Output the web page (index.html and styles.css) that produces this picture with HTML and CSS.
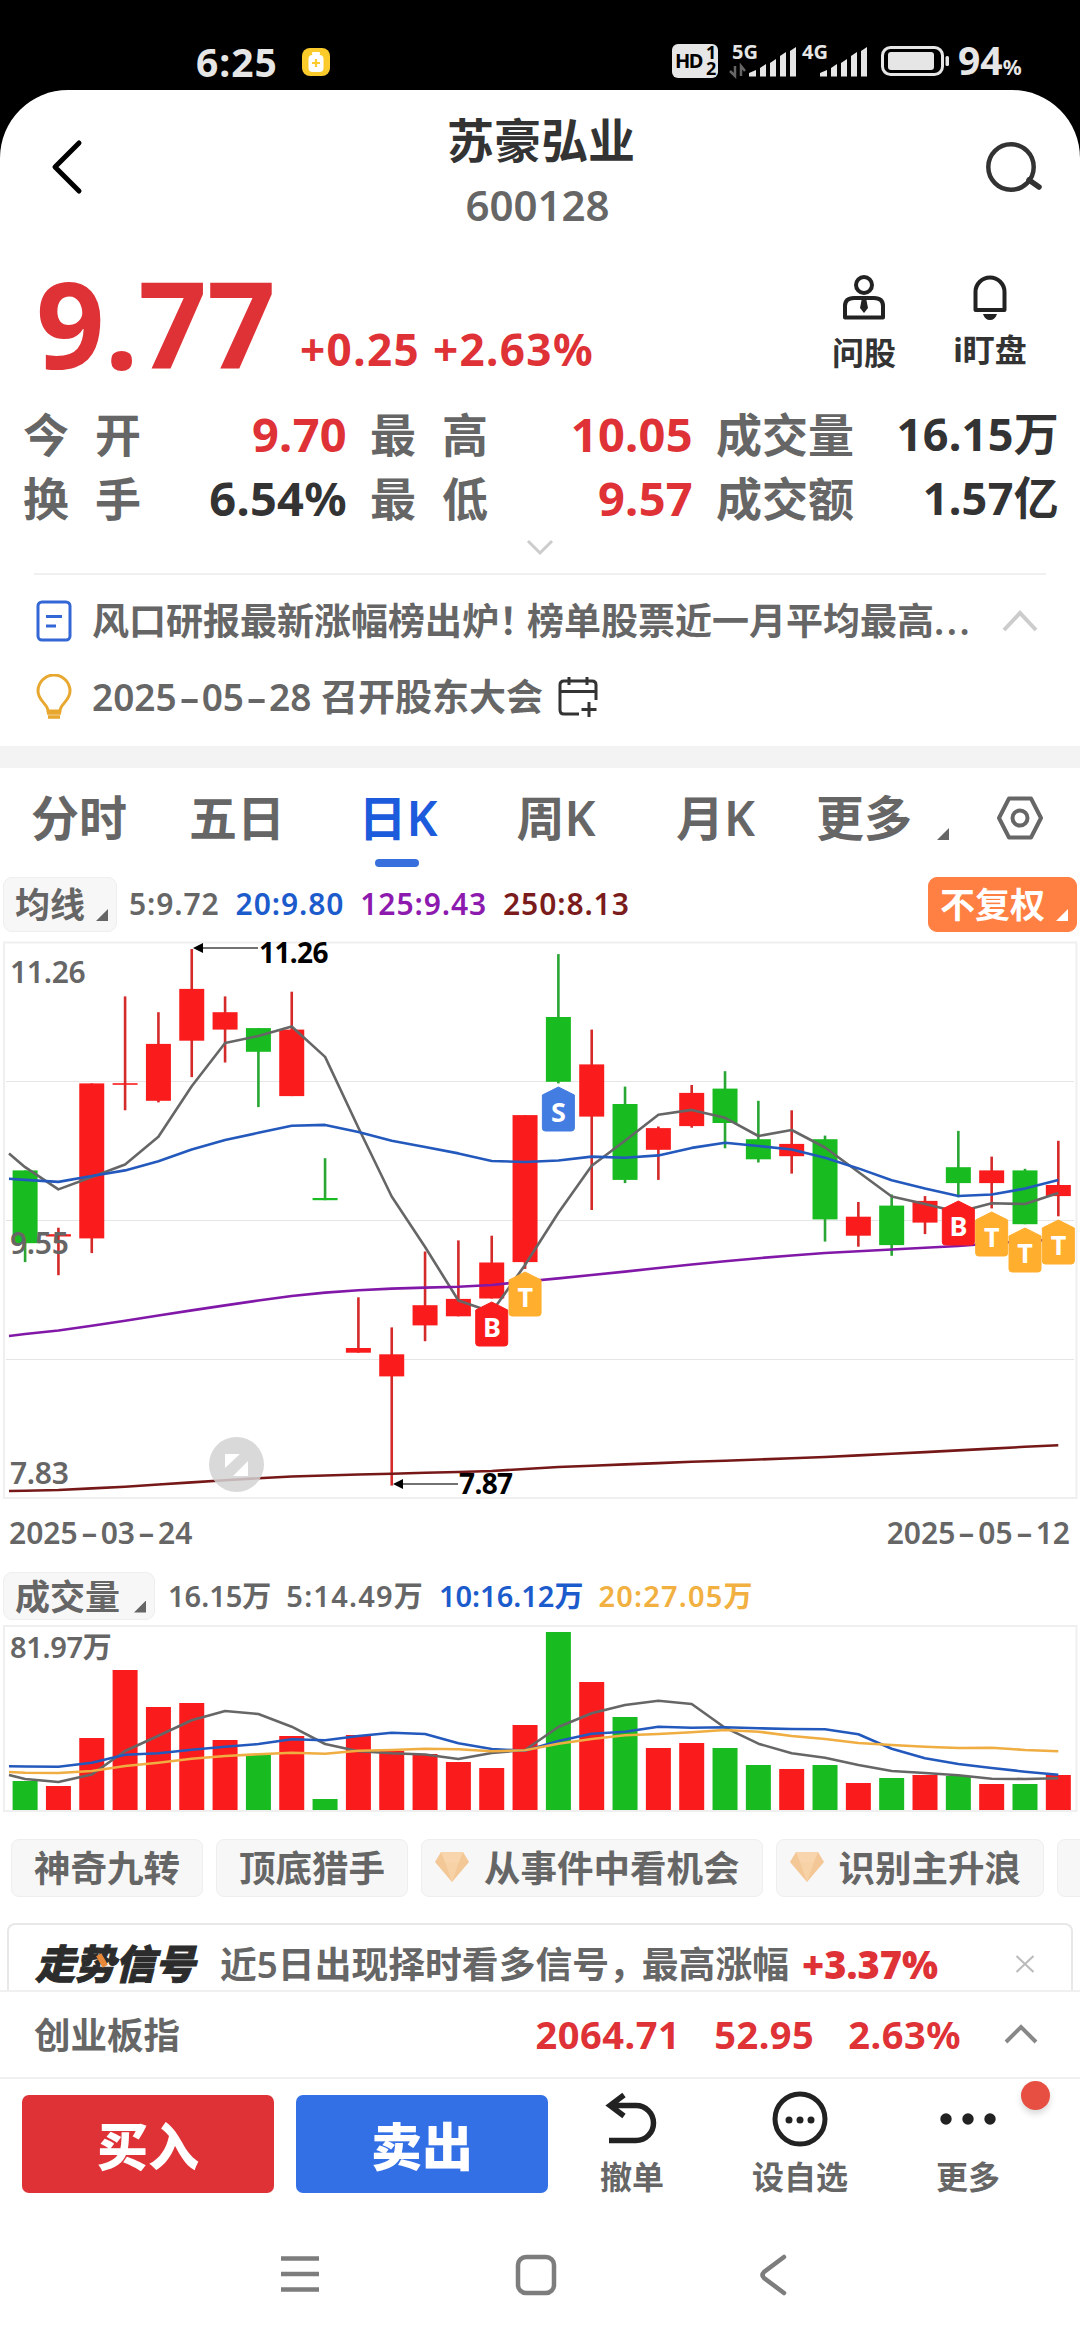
FILE: index.html
```
<!DOCTYPE html>
<html lang="zh-CN">
<head>
    <meta charset="UTF-8">
    <meta name="viewport" content="width=device-width, initial-scale=1.0">
    <title>苏豪弘业 600128</title>
    <link rel="stylesheet" href="styles.css">
</head>
<body>

<div class="status-bar">
    <span class="clock">6:25</span>
    <svg class="battery-tip" width="28" height="28" viewBox="0 0 28 28">
        <rect width="28" height="28" rx="8" fill="#fbcb2b"/>
        <rect x="6.500" y="7" width="15" height="17" rx="4" fill="#fff"/>
        <rect x="10" y="4" width="8" height="3" rx="1" fill="#fff"/>
        <path d="M14 11v8M10 15h8" stroke="#fbcb2b" stroke-width="2.200"/>
    </svg>
    <svg class="signals" width="280" height="40" viewBox="0 0 280 40">
        <rect x="1" y="2" width="46" height="34" rx="6" fill="#e6e6e6"/>
        <text class="hd" x="4" y="26">HD</text>
        <text class="hd-num" x="35" y="17">1</text>
        <text class="hd-num" x="35" y="33">2</text>
        <text class="net" x="61" y="17">5G</text>
        <path d="M64 24v10l-5-5M70 34V24l4 5" stroke="#666" stroke-width="2.500" fill="none"/>
        <path d="M78 31l7-3v6.500h-7zM89 26l6-4v12.500h-6zM99 21l6-4v17.500h-6zM109 14l6-4v24.500h-6zM119 9l6-4v29.500h-6z" fill="#e6e6e6"/>
        <text class="net" x="131" y="17">4G</text>
        <path d="M149 31l7-3v6.500h-7zM160 26l6-4v12.500h-6zM170 21l6-4v17.500h-6zM180 14l6-4v24.500h-6zM190 9l6-4v29.500h-6z" fill="#e6e6e6"/>
        <rect x="211.500" y="5.500" width="60" height="27" rx="8" fill="none" stroke="#e6e6e6" stroke-width="3"/>
        <rect x="217" y="10" width="46" height="18" rx="3" fill="#e6e6e6"/>
        <rect x="274.500" y="14" width="3.500" height="10" rx="1.500" fill="#e6e6e6"/>
    </svg>
    <span class="charge">94<small>%</small></span>
</div>

<div class="page">
    <header class="top-bar">
        <svg class="back" width="34" height="56" viewBox="0 0 34 56">
            <path d="M29 4L5 28l24 24" fill="none" stroke="#000" stroke-width="5" stroke-linecap="round" stroke-linejoin="round"/>
        </svg>
        <div class="stock">
            <h1>苏豪弘业</h1>
            <p>600128</p>
        </div>
        <svg class="search" width="60" height="54" viewBox="0 0 60 54">
            <circle cx="27" cy="27" r="22.700" fill="none" stroke="#333" stroke-width="4.500"/>
            <path d="M45 40l10 7" stroke="#333" stroke-width="5.500" stroke-linecap="round"/>
        </svg>
    </header>

    <section class="price-row">
        <span class="price">9.77</span>
        <span class="change">+0.25 +2.63%</span>
        <div class="tool ask">
            <svg width="44" height="46" viewBox="0 0 44 46">
                <g fill="none" stroke="#222" stroke-width="4">
                    <circle cx="22" cy="10" r="8"/>
                    <path d="M3 42.500V31q0-8 9-8h20q9 0 9 8v11.500z" stroke-linejoin="round"/>
                </g>
                <path d="M20 23h4l2 10-4 5-4-5z" fill="#222"/>
            </svg>
            <span>问股</span>
        </div>
        <div class="tool watch">
            <svg width="36" height="46" viewBox="0 0 36 46">
                <path d="M3.500 35V17a14.500 14.500 0 0 1 29 0v18z" fill="none" stroke="#222" stroke-width="4" stroke-linejoin="round"/>
                <path d="M11 39h14q-2 6-7 6t-7-6z" fill="#222"/>
            </svg>
            <span>i盯盘</span>
        </div>
    </section>

    <section class="stats">
        <div class="stat"><span class="label">今<i></i>开</span><b class="up">9.70</b></div>
        <div class="stat"><span class="label">最<i></i>高</span><b class="up">10.05</b></div>
        <div class="stat"><span class="label">成交量</span><b>16.15万</b></div>
        <div class="stat"><span class="label">换<i></i>手</span><b>6.54%</b></div>
        <div class="stat"><span class="label">最<i></i>低</span><b class="up">9.57</b></div>
        <div class="stat"><span class="label">成交额</span><b>1.57亿</b></div>
    </section>
    <div class="expand">
        <svg width="28" height="18" viewBox="0 0 28 18"><path d="M2 2l12 12L26 2" fill="none" stroke="#ccc" stroke-width="3"/></svg>
    </div>

    <section class="news">
        <div class="news-item">
            <svg width="36" height="42" viewBox="0 0 36 42">
                <rect x="2" y="2" width="32" height="38" rx="4" fill="none" stroke="#3467d6" stroke-width="3"/>
                <path d="M10 16.500h16M10 26h10" stroke="#3467d6" stroke-width="3"/>
            </svg>
            <p>风口研报最新涨幅榜出炉<span class="mark-end">！</span>榜单股票近一月平均最高<span class="dots">...</span></p>
            <svg class="fold" width="36" height="24" viewBox="0 0 36 24"><path d="M2 21L18 4l16 17" fill="none" stroke="#ccc" stroke-width="4"/></svg>
        </div>
        <div class="news-item event">
            <svg width="36" height="46" viewBox="0 0 36 46">
                <path d="M12 37c0-7-10-10-10-20a16 16 0 0 1 32 0c0 10-10 13-10 20z" fill="none" stroke="#e8a72f" stroke-width="3"/>
                <path d="M11 39h14M12 43h12" stroke="#e8a72f" stroke-width="3.500"/>
            </svg>
            <p>2025<i class="dash">-</i>05<i class="dash">-</i>28 召开股东大会</p>
            <svg width="42" height="42" viewBox="0 0 42 42">
                <path d="M22 38H7q-4 0-4-4V9q0-4 4-4h28q4 0 4 4v15M3 15.500h36M12 1v8M30 1v8M32 26v15M24.500 33.500h15" fill="none" stroke="#333" stroke-width="3"/>
            </svg>
        </div>
    </section>

    <nav class="tabs">
        <span>分时</span>
        <span>五日</span>
        <span class="active">日K</span>
        <span>周K</span>
        <span>月K</span>
        <span>更多</span>
        <i class="tri"></i>
        <svg width="48" height="44" viewBox="0 0 48 44">
            <path d="M13 2.500h22L45 22 35 41.500H13L3 22z" fill="none" stroke="#666" stroke-width="4" stroke-linejoin="round"/>
            <circle cx="24" cy="22" r="7.500" fill="none" stroke="#666" stroke-width="4"/>
        </svg>
    </nav>

    <div class="ma-row">
        <span class="picker">均线<i class="tri"></i></span>
        <span class="c-gray">5:9.72</span>
        <span class="c-blue">20:9.80</span>
        <span class="c-purple">125:9.43</span>
        <span class="c-brown">250:8.13</span>
        <span class="picker adjust">不复权<i class="tri"></i></span>
    </div>

    <svg id="kline" class="chart" width="1080" height="562" viewBox="0 940 1080 562"></svg>
    <div class="dates">
        <span>2025<i class="dash">-</i>03<i class="dash">-</i>24</span>
        <span>2025<i class="dash">-</i>05<i class="dash">-</i>12</span>
    </div>

    <div class="vol-row">
        <span class="picker">成交量<i class="tri"></i></span>
        <span class="c-gray">16.15万</span>
        <span class="c-gray wide">5:14.49万</span>
        <span class="c-blue">10:16.12万</span>
        <span class="c-orange wide">20:27.05万</span>
    </div>
    <svg id="volume" class="chart" width="1080" height="190" viewBox="0 1624 1080 190"></svg>

    <div class="chips">
        <span class="chip">神奇九转</span>
        <span class="chip">顶底猎手</span>
        <span class="chip gem"><svg width="34" height="30" viewBox="0 0 34 30"><path d="M6 0h22l6 10-17 20L0 10z" fill="#f3c796"/><path d="M6 0h22l-4 10H10z" fill="#f8d5ad"/><path d="M10 10h14l-7 20z" fill="#f6d2a6"/></svg>从事件中看机会</span>
        <span class="chip gem"><svg width="34" height="30" viewBox="0 0 34 30"><path d="M6 0h22l6 10-17 20L0 10z" fill="#f3c796"/><path d="M6 0h22l-4 10H10z" fill="#f8d5ad"/><path d="M10 10h14l-7 20z" fill="#f6d2a6"/></svg>识别主升浪</span>
        <span class="chip last">抄底</span>
    </div>

    <div class="signal">
        <span class="signal-logo">走势信号</span>
        <span>近5日出现择时看多信号<span class="comma">，</span>最高涨幅</span>
        <b>+3.37%</b>
        <svg width="20" height="18" viewBox="0 0 20 18"><path d="M1.500 1l17 16M18.500 1l-17 16" stroke="#bbb" stroke-width="2"/></svg>
    </div>

    <div class="index-row">
        <span class="index-name">创业板指</span>
        <b class="point">2064.71</b>
        <b class="diff">52.95</b>
        <b class="pct">2.63%</b>
        <svg width="34" height="22" viewBox="0 0 34 22"><path d="M2 19L17 4l15 15" fill="none" stroke="#888" stroke-width="4"/></svg>
    </div>

    <footer class="trade-bar">
        <button class="buy">买入</button>
        <button class="sell">卖出</button>
        <div class="action cancel">
            <svg width="56" height="54" viewBox="0 0 56 54">
                <path d="M20 4L6 14.500 20 25M7 14.500h25a17.500 17.500 0 0 1 0 35H5" fill="none" stroke="#222" stroke-width="5.500"/>
            </svg>
            <span>撤单</span>
        </div>
        <div class="action fav">
            <svg width="56" height="56" viewBox="0 0 56 56">
                <circle cx="28" cy="28" r="25" fill="none" stroke="#222" stroke-width="5"/>
                <circle cx="17" cy="29" r="3.500"/><circle cx="28" cy="29" r="3.500"/><circle cx="39" cy="29" r="3.500"/>
            </svg>
            <span>设自选</span>
        </div>
        <div class="action more">
            <svg width="56" height="56" viewBox="0 0 56 56">
                <circle cx="6" cy="28" r="5.700"/><circle cx="28" cy="28" r="5.700"/><circle cx="50" cy="28" r="5.700"/>
            </svg>
            <span>更多</span>
            <i class="dot"></i>
        </div>
    </footer>

    <div class="sys-nav">
        <svg width="40" height="40" viewBox="0 0 40 40"><path d="M1 4.500h38M1 20h38M1 35.500h38" stroke="#7d7d7d" stroke-width="4.500"/></svg>
        <svg class="home" width="42" height="42" viewBox="0 0 42 42"><rect x="3" y="3" width="36" height="36" rx="8" fill="none" stroke="#7d7d7d" stroke-width="4.500"/></svg>
        <svg width="28" height="42" viewBox="0 0 28 42"><path d="M25 3L5 18q-3 3 0 6l20 15" fill="none" stroke="#7d7d7d" stroke-width="4.500" stroke-linecap="round"/></svg>
    </div>
</div>

<script src="chart.js"></script>
</body>
</html>
```
FILE: styles.css
```
* {
    box-sizing: border-box;
}
body {
    margin: 0;
    width: 1080px;
    height: 2340px;
    overflow: hidden;
    background: #000;
    font-family: "Noto Sans", "Noto Sans CJK SC", sans-serif;
    font-weight: 600;
    color: #333;
}
h1, p {
    margin: 0;
}
svg {
    display: block;
    flex: none;
}
span, b {
    white-space: nowrap;
}
.status-bar {
    height: 90px;
    padding: 34px 0 0 196px;
    display: flex;
    align-items: center;
    color: #e6e6e6;
}
.clock {
    width: 106px;
    font-size: 39px;
    font-weight: 700;
    line-height: 56px;
    letter-spacing: 1px;
}
.signals {
    margin-left: 341px;
    fill: #e6e6e6;
    overflow: visible;
}
.signals .hd {
    font-size: 20px;
    font-weight: 700;
    fill: #000;
    letter-spacing: -1.5px;
}
.signals .hd-num {
    font-size: 18px;
    font-weight: 700;
    fill: #000;
}
.signals .net {
    font-size: 20px;
    font-weight: 700;
}
.charge {
    margin: 2px 0 0 7px;
    font-size: 39px;
    font-weight: 700;
    line-height: 56px;
}
.charge small {
    font-size: 21px;
}
.page {
    height: 2250px;
    background: #fff;
    border-radius: 68px 68px 0 0;
    overflow: hidden;
}

.top-bar {
    height: 160px;
    padding: 0 36px 0 50px;
    display: flex;
    justify-content: space-between;
}
.top-bar .back {
    margin-top: 49px;
}
.top-bar .search {
    margin-top: 50px;
}
.stock {
    text-align: center;
    padding: 18px 0 0 14px;
}
.stock h1 {
    font-size: 47px;
    line-height: 64px;
    font-weight: 700;
}
.stock p {
    font-size: 42px;
    line-height: 66px;
    color: #666;
    margin-right: 7px;
}

.price-row {
    height: 153px;
    display: flex;
    align-items: flex-start;
    color: #de3237;
    padding-left: 36px;
}
.price {
    width: 264px;
    font-size: 120px;
    line-height: 145px;
    font-weight: 700;
}
.change {
    width: 520px;
    font-size: 44px;
    line-height: 60px;
    letter-spacing: 1.4px;
    font-weight: 700;
    margin-top: 69px;
}
.tool {
    display: flex;
    flex-direction: column;
    align-items: center;
    width: 88px;
    margin-top: 25px;
    color: #333;
    font-size: 32px;
    line-height: 44px;
    font-weight: 700;
}
.tool span {
    margin-top: 10px;
}
.watch {
    margin-left: 38px;
}
.watch span {
    margin-top: 7px;
}

.stats {
    display: grid;
    grid-template-columns: 324px 323px 343px;
    column-gap: 23px;
    padding-left: 23px;
    position: relative;
    top: -1px;
}
.stat {
    display: flex;
    justify-content: space-between;
    height: 64px;
    line-height: 64px;
    font-size: 46px;
}
.stat .label {
    color: #666;
}
.stat .label i {
    display: inline-block;
    width: 26px;
}
.stat b {
    font-size: 47px;
    font-weight: 700;
    letter-spacing: 0.3px;
}
.stat:nth-child(3n) b {
    font-size: 45px;
}
.up {
    color: #de3237;
}
.expand {
    height: 42px;
    display: flex;
    justify-content: center;
    padding-top: 8px;
}

.news {
    margin: 0 34px;
    height: 173px;
    border-top: 2px solid #f0f0f0;
    padding-top: 8px;
    color: #666;
}
.news-item {
    display: flex;
    align-items: center;
    height: 76px;
    font-size: 37px;
    line-height: 56px;
    padding-left: 2px;
}
.news-item p {
    margin-left: 20px;
    white-space: nowrap;
}
.news-item .fold {
    margin: 0 8px 0 auto;
}
.mark-end {
    letter-spacing: -9px;
}
.dots {
    letter-spacing: 2.5px;
}
.event p {
    margin-right: 14px;
}
.dash {
    display: inline-block;
    width: 25px;
    text-align: center;
    font-style: normal;
    transform: scaleX(1.7);
}

.tabs {
    border-top: 22px solid #f3f3f3;
    height: 125px;
    display: grid;
    grid-template-columns: 158px 158px 164px 152px 167px 130px 30px 1fr;
    font-size: 48px;
    line-height: 100px;
    text-align: center;
    color: #666;
}
.tabs .active {
    color: #1c5bdc;
    position: relative;
}
.tabs .active::after {
    content: "";
    position: absolute;
    left: 59px;
    top: 91px;
    width: 44px;
    height: 8px;
    border-radius: 4px;
    background: #3770dd;
}
.tabs .tri {
    margin: 60px 0 0 8px;
}
.tabs svg {
    margin: 28px 0 0 37px;
}
.tri {
    width: 12px;
    height: 12px;
    background: currentColor;
    clip-path: polygon(100% 0, 100% 100%, 0 100%);
}

.ma-row,
.vol-row {
    display: flex;
    align-items: center;
    padding: 0 3px;
    font-size: 30px;
    line-height: 40px;
}
.ma-row {
    height: 69px;
    padding-bottom: 3px;
    gap: 16px;
    letter-spacing: 0.9px;
}
.picker {
    display: flex;
    width: 114px;
    height: 55px;
    padding: 2px 8px 0 11px;
    align-items: center;
    justify-content: space-between;
    font-size: 35px;
    line-height: 52px;
    letter-spacing: 0;
    color: #666;
    background: #f7f7f7;
    border: 1px solid #eee;
    border-radius: 9px;
}
.picker .tri {
    margin-top: 20px;
}
.ma-row .c-gray {
    margin-left: -4px;
}
.adjust {
    width: 149px;
    margin-left: auto;
    color: #fff;
    background: #ff8042;
    border-color: #ff8042;
    font-weight: 700;
}
.c-gray { color: #666; }
.c-blue { color: #1c5bcc; }
.c-purple { color: #8d1aae; }
.c-brown { color: #7b1c1c; }
.c-orange { color: #f2b040; }

.chart text {
    font-size: 30px;
    fill: #666;
    letter-spacing: -0.3px;
}
.chart .mark {
    font-size: 28px;
    font-weight: 700;
    fill: #000;
    letter-spacing: -0.6px;
}
.chart .flag-text {
    font-size: 27px;
    font-weight: 700;
    fill: #fff;
    text-anchor: middle;
}
.dates {
    height: 69px;
    padding: 10px 10px 0 9px;
    display: flex;
    justify-content: space-between;
    font-size: 30px;
    line-height: 42px;
    color: #666;
}
.dates .dash {
    width: 23px;
}
.vol-row {
    height: 53px;
    padding-bottom: 4px;
    gap: 15px;
    font-size: 29px;
}
.vol-row .picker {
    width: 152px;
    height: 48px;
    margin-right: -2px;
}
.wide {
    letter-spacing: 1.2px;
}

.chips {
    display: flex;
    gap: 13px;
    height: 109px;
    padding: 25px 0 0 11px;
}
.chip {
    flex: none;
    height: 58px;
    padding: 0 22px;
    font-size: 36.5px;
    line-height: 56px;
    color: #666;
    background: #f7f7f7;
    border: 1px solid #eee;
    border-radius: 8px;
}
.gem {
    display: flex;
    gap: 15px;
    padding-left: 13px;
}
.gem svg {
    margin-top: 12px;
}
.signal {
    height: 67px;
    margin: 0 7px;
    padding: 13px 36px 0 26px;
    display: flex;
    border: 2px solid #e8e8e8;
    border-bottom: 0;
    border-radius: 8px 8px 0 0;
    font-size: 36.8px;
    line-height: 52px;
    color: #666;
}
.signal-logo {
    position: relative;
    width: 185px;
    font-size: 40px;
    font-weight: 900;
    font-style: italic;
    color: #2c2c2c;
    -webkit-text-stroke: 1px #2c2c2c;
}
/* orange tick laid over the second character */
.signal-logo::after {
    content: "";
    position: absolute;
    left: 64px;
    top: 16px;
    width: 6px;
    height: 13px;
    background: #e8893a;
    transform: rotate(-30deg);
}
.comma {
    letter-spacing: -4px;
}
.signal b {
    margin-left: 13px;
    font-size: 38px;
    font-weight: 900;
    color: #de3237;
}
.signal svg {
    margin: 17px 0 0 auto;
}
.index-row {
    height: 87px;
    border-top: 2px solid #f0f0f0;
    padding: 0 42px 2px 34px;
    display: flex;
    align-items: center;
    font-size: 36.5px;
    color: #666;
}
.index-name {
    margin-right: auto;
}
.index-row b {
    font-size: 38px;
    font-weight: 700;
    letter-spacing: 0.5px;
    color: #de3237;
    margin-right: 34px;
}
.index-row .pct {
    margin-right: 43px;
}

.trade-bar {
    height: 128px;
    border-top: 2px solid #f0f0f0;
    padding: 16px 0 0 22px;
    display: flex;
}
.trade-bar button {
    width: 252px;
    height: 98px;
    margin-right: 22px;
    padding: 0;
    border: 0;
    border-radius: 7px;
    font: 900 51px/98px "Noto Sans CJK SC", sans-serif;
    color: #fff;
}
.trade-bar .buy {
    background: #de3237;
}
.trade-bar .sell {
    background: #3370e6;
}
.action {
    position: relative;
    display: flex;
    flex-direction: column;
    align-items: center;
    justify-content: space-between;
    width: 100px;
    height: 106px;
    margin-top: -4px;
    font-size: 32px;
    line-height: 40px;
    color: #666;
}
.action svg {
    fill: #222;
}
.cancel {
    margin-left: 12px;
}
.fav {
    margin-left: 68px;
}
.more {
    margin-left: 68px;
}
.dot {
    position: absolute;
    left: 103px;
    top: -10px;
    width: 29px;
    height: 29px;
    border-radius: 50%;
    background: #e64f42;
    box-shadow: 0 4px 6px rgba(0, 0, 0, 0.15);
}
.sys-nav {
    height: 135px;
    padding: 49px 293px 0 280px;
    display: flex;
    justify-content: space-between;
}
.home {
    margin-right: 7px;
}
```
FILE: chart.js
```
const RED = '#fa1c1c';
const GREEN = '#18bb20';
const STEP = 33.33;
const FIRST = 25.1;
const cx = i => FIRST + i * STEP;

// [color, high, bodyTop, bodyBottom, low, volumeTop]
const days = [
    ['g', 1170.4, 1170.4, 1243.2, 1262.1, 1781],
    ['r', 1227.7, 1234.2, 1236.5, 1275.2, 1786],
    ['r', 1083.4, 1083.4, 1238.4, 1253.1, 1738],
    ['r', 996.4, 1083.2, 1084.8, 1110.3, 1670],
    ['r', 1012.2, 1043.9, 1100.8, 1102.4, 1707],
    ['r', 949, 988.9, 1040.7, 1077.1, 1703],
    ['r', 996.4, 1012.2, 1029.6, 1062.5, 1740],
    ['g', 1028.1, 1028.1, 1051.8, 1107.1, 1754],
    ['r', 991.7, 1029.6, 1096.1, 1096.1, 1736],
    ['g', 1158.2, 1198, 1200.2, 1200.2, 1799],
    ['r', 1297.3, 1348, 1352.7, 1352.7, 1735],
    ['r', 1327.4, 1354.3, 1376.4, 1485.6, 1751],
    ['r', 1251.5, 1305.2, 1325.4, 1341.2, 1754],
    ['r', 1240.4, 1298.9, 1316.3, 1316.3, 1762],
    ['r', 1235.7, 1262.5, 1298.5, 1298.5, 1768],
    ['r', 1115.1, 1115.1, 1262.1, 1268.9, 1725],
    ['g', 954.1, 1017, 1081.8, 1083.4, 1632],
    ['r', 1029.6, 1064.4, 1116.6, 1210, 1682],
    ['g', 1086.6, 1104, 1179.9, 1183.1, 1717],
    ['r', 1126.5, 1128.1, 1149.8, 1179.9, 1748],
    ['r', 1085, 1092.9, 1126.1, 1127.7, 1743],
    ['g', 1071.2, 1088.6, 1123, 1148.3, 1748],
    ['g', 1100.8, 1139.2, 1159.3, 1162.5, 1765],
    ['r', 1110.3, 1143.9, 1156.2, 1173.6, 1769],
    ['g', 1135.6, 1139.2, 1219.4, 1241.6, 1765],
    ['r', 1202, 1216.7, 1235.7, 1246.7, 1783],
    ['g', 1194.5, 1205.6, 1245.1, 1255.8, 1778],
    ['r', 1196.1, 1200.9, 1222.6, 1234.1, 1775],
    ['g', 1130.9, 1167.2, 1183.1, 1197.3, 1776],
    ['r', 1156.6, 1170.4, 1183.1, 1208.4, 1784],
    ['g', 1168.8, 1170.4, 1224.2, 1224.2, 1784],
    ['r', 1140.8, 1185, 1196.1, 1216.3, 1775]
];

// the first value of each line sits on the left edge of the plot
const priceLines = [
    ['#666', [1153.4, 1167.2, 1189.4, 1177, 1164.5, 1136.8, 1086.2, 1043, 1036, 1026.5, 1056.9, 1127.7, 1196.5, 1247, 1300.5, 1312, 1265, 1212.7, 1165.7, 1140.8, 1114.7, 1109.9, 1117.8, 1136, 1130, 1147.5, 1172, 1196.5, 1204, 1212, 1203.2, 1204, 1193]],
    ['#2359bd', [1178.7, 1179.9, 1181.9, 1176, 1170.4, 1161.3, 1149.5, 1140, 1132.8, 1125.7, 1124.9, 1132, 1140.8, 1147, 1153.4, 1161, 1162, 1160.5, 1156.6, 1157.8, 1155.4, 1147.9, 1142.7, 1146, 1149.5, 1157.8, 1168.4, 1180.3, 1188.6, 1196, 1194.5, 1188.6, 1180]],
    ['#8118a8', [1336, 1334, 1330.5, 1325.7, 1320.7, 1315.5, 1310.4, 1305.4, 1300.5, 1296, 1292.6, 1290.3, 1288.6, 1287.6, 1286.7, 1285, 1281.5, 1278.4, 1275, 1271.6, 1268, 1264.5, 1261.2, 1258.2, 1255.5, 1253, 1251.2, 1249.5, 1247.8, 1246, 1243.5, 1241, 1239.6]],
    ['#761818', [1491, 1490.8, 1490, 1488.4, 1486.7, 1484.5, 1482.4, 1480.2, 1478.2, 1476.5, 1475.5, 1474.5, 1473.7, 1472.8, 1472, 1471, 1469, 1467, 1465.8, 1464.4, 1463.1, 1461.8, 1460.7, 1459.5, 1458.3, 1457, 1455.4, 1453.8, 1452.1, 1450.4, 1448.6, 1446.8, 1445.2]]
];
const volumeLines = [
    ['#666', [1775, 1779, 1782, 1774.5, 1751, 1735.7, 1720.3, 1711, 1714, 1726.7, 1744, 1751.3, 1753.3, 1754.5, 1759, 1753, 1750, 1727, 1713.3, 1705, 1700.7, 1704, 1727.7, 1743.7, 1753.3, 1757.7, 1765, 1771, 1773, 1775.3, 1778.7, 1779, 1778.3]],
    ['#2359bd', [1766.3, 1766.5, 1766.7, 1762.7, 1754.7, 1753.3, 1749.7, 1746.7, 1744, 1739.3, 1740.3, 1736, 1732.7, 1734, 1743.3, 1749, 1750.7, 1741, 1733.7, 1731.7, 1726.7, 1727.7, 1727.3, 1728.3, 1729, 1729.3, 1734.3, 1748.7, 1758.3, 1764, 1768, 1771.7, 1774.7]],
    ['#efad42', [1772, 1772.7, 1773, 1771, 1766, 1762.7, 1758.7, 1756, 1754.3, 1752.7, 1753.7, 1750.7, 1750, 1748.7, 1749.3, 1751.3, 1750.3, 1743.7, 1739, 1735.3, 1734, 1732.3, 1730, 1731.7, 1736, 1739, 1743, 1745, 1746.7, 1748, 1747.7, 1750, 1751.3]]
];

// trade flags: [day, top, letter, color]
const flags = [
    [14, 1302, 'B', RED],
    [15, 1272, 'T', '#ffae2e'],
    [16, 1087, 'S', '#437de2'],
    [28, 1201, 'B', RED],
    [29, 1212, 'T', '#ffae2e'],
    [30, 1228, 'T', '#ffae2e'],
    [31, 1220, 'T', '#ffae2e']
];

function rect(x, y, w, h, fill) {
    return `<rect x="${x}" y="${y}" width="${w}" height="${h}" fill="${fill}"/>`;
}

function drawLines(lines) {
    return lines.map(([color, ys]) => {
        const points = ys.map((y, i) => `${i ? cx(i - 1).toFixed(1) : 9},${y}`).join(' ');
        return `<polyline points="${points}" fill="none" stroke="${color}" stroke-width="2.6" stroke-linejoin="round"/>`;
    }).join('');
}

function drawFrame(top, bottom) {
    return `<rect x="4" y="${top}" width="1072.5" height="${bottom - top}" fill="none" stroke="#efefef" stroke-width="2"/>`;
}

let k = drawFrame(942.5, 1498);
[1081.5, 1220.5, 1359.5].forEach(y => {
    k += rect(6, y - 0.5, 1068, 1, '#e6e6e6');
});
let v = drawFrame(1626, 1811);
days.forEach(([c, high, top, bottom, low, vol], i) => {
    const color = c === 'r' ? RED : GREEN;
    const wick = c === 'r' ? '#d42a2a' : '#2aa635';
    k += rect(cx(i) - 1.3, high, 2.6, low - high, wick);
    k += rect(cx(i) - 12.5, top, 25, bottom - top, color);
    v += rect(cx(i) - 12.5, vol, 25, 1810 - vol, color);
});
k += drawLines(priceLines);
v += drawLines(volumeLines);

flags.forEach(([i, y, letter, color]) => {
    const x = cx(i);
    k += `<path d="M${x} ${y}l16 8v33q0 3-3 3h-26q-3 0-3-3v-33z" fill="${color}" stroke="${color}" stroke-linejoin="round"/>`;
    k += `<text class="flag-text" x="${x}" y="${y + 35}">${letter}</text>`;
});

k += `<text x="10" y="983">11.26</text>
    <text x="10" y="1253.5">9.55</text>
    <text x="10" y="1484">7.83</text>
    <path d="M198 948h60M400 1484h58" stroke="#444" stroke-width="1.3"/>
    <path d="M193 948l10-5v10zM393 1484l10-5v10z" fill="#000"/>
    <text class="mark" x="259" y="963">11.26</text>
    <text class="mark" x="459" y="1494">7.87</text>
    <circle cx="236.500" cy="1464.500" r="27.500" fill="#d2d2d2" fill-opacity="0.85"/>
    <path d="M225 1454h15l-15 14zM248 1461v15h-15z" fill="#fff"/>`;
v += '<text x="10" y="1658" style="font-size: 29px">81.97万</text>';

document.getElementById('kline').innerHTML = k;
document.getElementById('volume').innerHTML = v;
```
